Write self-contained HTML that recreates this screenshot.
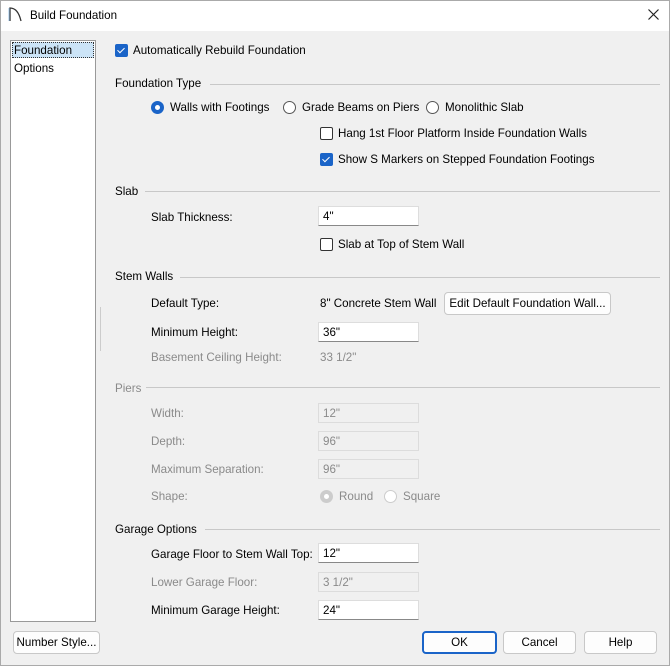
<!DOCTYPE html><html><head><style>
body{margin:0;width:670px;height:666px;overflow:hidden;font-family:"Liberation Sans",sans-serif;font-size:11.6px;color:#000;background:#f0f0f0}
.a{position:absolute;white-space:nowrap}
.win{position:absolute;left:0;top:0;width:670px;height:666px;background:#f0f0f0}
.bd{position:absolute;left:0;top:0;width:668px;height:664px;border:1px solid #aaa}
.tb{position:absolute;left:0;top:0;width:670px;height:31px;background:#fff}
.in{position:absolute;height:20px;border:1px solid #ddd;border-bottom:1px solid #888;background:#fff;padding-left:4px;line-height:19px;box-sizing:border-box;width:101px}
.dis{background:#f0f0f0;border:1px solid #dcdcdc;color:#8a8a8a}
.g{color:#8a8a8a}
.hl{position:absolute;height:1px;background:#c8c8c8}
.cb{position:absolute;width:11px;height:11px;border:1px solid #333;border-radius:2px;background:#fff}
.cbc{background:#1a64c8;border-color:#1a64c8}
.cbc:after{content:"";position:absolute;left:3px;top:1px;width:3px;height:6px;border:solid #fff;border-width:0 1.5px 1.5px 0;transform:rotate(45deg)}
.rd{position:absolute;width:11px;height:11px;border:1px solid #555;border-radius:50%;background:#fff}
.rdc{background:#1a64c8;border-color:#1a64c8}
.rdc:after{content:"";position:absolute;left:3px;top:3px;width:5px;height:5px;border-radius:50%;background:#fff}
.btn{position:absolute;height:21px;border:1px solid #c8c8c8;border-radius:4px;background:#fdfdfd;text-align:center;line-height:21px;box-sizing:content-box}
</style></head><body>
<div class="win">
<div class="tb"></div>
<div class="bd"></div>
<svg class="a" style="left:7px;top:6px" width="16" height="16"><path d="M3 15V2 Q11 2 14 15" fill="none" stroke="#333" stroke-width="1.3"/><path d="M2 2v13" stroke="#9cc4e8" stroke-width="1"/></svg>
<div class="a" style="left:30px;top:9px">Build Foundation</div>
<svg class="a" style="left:648px;top:9px" width="11" height="11"><path d="M0.5 0.5L10.5 10.5M10.5 0.5L0.5 10.5" stroke="#222" stroke-width="1.2"/></svg>
<div class="a" style="left:10px;top:40px;width:84px;height:580px;background:#fff;border:1px solid #999"></div>
<div class="a" style="left:12px;top:42px;width:82px;height:16px;background:#cce4f7;border:1px dotted #333;box-sizing:border-box"></div>
<div class="a" style="left:14px;top:44px">Foundation</div>
<div class="a" style="left:14px;top:62px">Options</div>
<div class="a" style="left:100px;top:307px;width:1px;height:44px;background:#ccc"></div>
<div class="cbc cb" style="left:115px;top:44px"></div><div class="a" style="left:133px;top:44px">Automatically Rebuild Foundation</div>
<div class="a" style="left:115px;top:77px">Foundation Type</div><div class="hl" style="left:210px;top:84px;width:450px"></div>
<div class="rd rdc" style="left:151px;top:101px"></div><div class="a" style="left:170px;top:101px">Walls with Footings</div>
<div class="rd" style="left:283px;top:101px"></div><div class="a" style="left:302px;top:101px">Grade Beams on Piers</div>
<div class="rd" style="left:426px;top:101px"></div><div class="a" style="left:445px;top:101px">Monolithic Slab</div>
<div class="cb" style="left:320px;top:127px"></div><div class="a" style="left:338px;top:127px">Hang 1st Floor Platform Inside Foundation Walls</div>
<div class="cb cbc" style="left:320px;top:153px"></div><div class="a" style="left:338px;top:153px">Show S Markers on Stepped Foundation Footings</div>
<div class="a" style="left:115px;top:185px">Slab</div><div class="hl" style="left:145px;top:191px;width:515px"></div>
<div class="a" style="left:151px;top:211px">Slab Thickness:</div><div class="in" style="left:318px;top:206px">4"</div>
<div class="cb" style="left:320px;top:238px"></div><div class="a" style="left:338px;top:238px">Slab at Top of Stem Wall</div>
<div class="a" style="left:115px;top:270px">Stem Walls</div><div class="hl" style="left:180px;top:277px;width:480px"></div>
<div class="a" style="left:151px;top:297px">Default Type:</div><div class="a" style="left:320px;top:297px">8" Concrete Stem Wall</div>
<div class="btn" style="left:444px;top:292px;width:165px">Edit Default Foundation Wall...</div>
<div class="a" style="left:151px;top:326px">Minimum Height:</div><div class="in" style="left:318px;top:322px">36"</div>
<div class="a g" style="left:151px;top:351px">Basement Ceiling Height:</div><div class="a g" style="left:320px;top:351px">33 1/2"</div>
<div class="a g" style="left:115px;top:382px">Piers</div><div class="hl" style="left:146px;top:387px;width:514px"></div>
<div class="a g" style="left:151px;top:407px">Width:</div><div class="in dis" style="left:318px;top:403px">12"</div>
<div class="a g" style="left:151px;top:435px">Depth:</div><div class="in dis" style="left:318px;top:431px">96"</div>
<div class="a g" style="left:151px;top:463px">Maximum Separation:</div><div class="in dis" style="left:318px;top:459px">96"</div>
<div class="a g" style="left:151px;top:490px">Shape:</div>
<div class="rd" style="left:320px;top:490px;background:#ccc;border-color:#ccc"><div style="position:absolute;left:3px;top:3px;width:5px;height:5px;border-radius:50%;background:#fff"></div></div><div class="a g" style="left:339px;top:490px">Round</div>
<div class="rd" style="left:384px;top:490px;border-color:#ccc"></div><div class="a g" style="left:403px;top:490px">Square</div>
<div class="a" style="left:115px;top:523px">Garage Options</div><div class="hl" style="left:205px;top:529px;width:455px"></div>
<div class="a" style="left:151px;top:548px">Garage Floor to Stem Wall Top:</div><div class="in" style="left:318px;top:543px">12"</div>
<div class="a g" style="left:151px;top:576px">Lower Garage Floor:</div><div class="in dis" style="left:318px;top:572px">3 1/2"</div>
<div class="a" style="left:151px;top:604px">Minimum Garage Height:</div><div class="in" style="left:318px;top:600px">24"</div>
<div class="btn" style="left:13px;top:631px;width:85px">Number Style...</div>
<div class="btn" style="left:422px;top:631px;width:71px;border:2px solid #1a64c8;height:19px;line-height:19px">OK</div>
<div class="btn" style="left:503px;top:631px;width:71px">Cancel</div>
<div class="btn" style="left:584px;top:631px;width:71px">Help</div>
</div>
</body></html>
